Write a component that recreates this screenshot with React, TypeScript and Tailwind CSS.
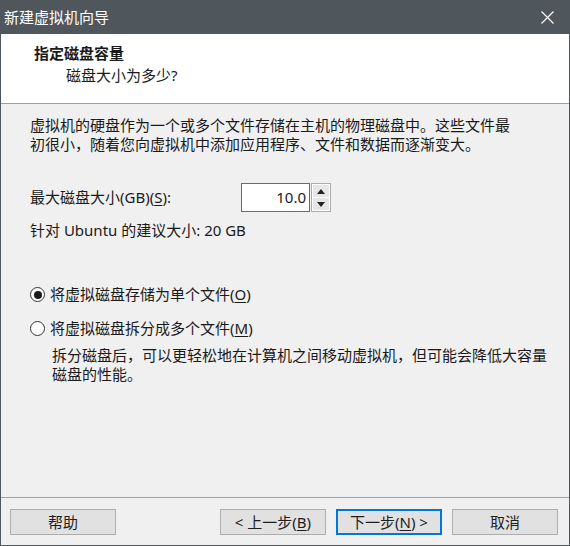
import type { ReactNode } from 'react'

const font = { fontFamily: '"Noto Sans", "Noto Sans CJK SC", sans-serif' }

function Key({ children }: { children: ReactNode }) {
  return <span className="underline underline-offset-2">{children}</span>
}

function Radio({ checked, children }: { checked?: boolean; children: ReactNode }) {
  return (
    <div className="flex items-center h-[19px]">
      <span className="flex h-[15px] w-[15px] items-center justify-center rounded-full border border-[#333] bg-white">
        {checked && <span className="h-[8px] w-[8px] rounded-full bg-[#1a1a1a]" />}
      </span>
      <span className="ml-[5px]">{children}</span>
    </div>
  )
}

function Button({ children, primary }: { children: ReactNode; primary?: boolean }) {
  return (
    <button
      type="button"
      className={
        primary
          ? 'h-[26px] w-[106px] border-2 border-[#0078d7] bg-[#e1e1e1] text-[15px] leading-none text-[#1e1e1e]'
          : 'h-[26px] w-[106px] border border-[#adadad] bg-[#e1e1e1] text-[15px] leading-none text-[#1e1e1e]'
      }
    >
      {children}
    </button>
  )
}

export default function App() {
  return (
    <div className="flex h-[546px] w-[570px] flex-col bg-[#4f565c] text-[15px] text-[#1a1a1a]" style={font}>
      <div className="flex h-[34px] shrink-0 items-center justify-between pl-[4px] pr-[16px] text-white">
        <span className="leading-[20px]">新建虚拟机向导</span>
        <svg width="13" height="13" viewBox="0 0 13 13" className="mt-[1px]">
          <path d="M0.5 0.5 L12.5 12.5 M12.5 0.5 L0.5 12.5" stroke="white" strokeWidth="1.2" />
        </svg>
      </div>

      <div className="mx-[1px] mb-[1px] flex flex-1 flex-col bg-[#f0f0f0]">
        <div className="h-[70px] shrink-0 border-b border-[#a0a0a0] bg-white pl-[33px] pt-[9px]">
          <div className="font-bold leading-[20px]">指定磁盘容量</div>
          <div className="mt-[2px] pl-[32px] leading-[20px]">磁盘大小为多少?</div>
        </div>

        <div className="flex-1 pl-[29px] pt-[12px]">
          <p className="leading-[19px]">
            虚拟机的硬盘作为一个或多个文件存储在主机的物理磁盘中。这些文件最
            <br />
            初很小，随着您向虚拟机中添加应用程序、文件和数据而逐渐变大。
          </p>

          <div className="mt-[29px] flex items-center">
            <span className="w-[211px] leading-[19px]">
              最大磁盘大小(GB)(<Key>S</Key>):
            </span>
            <div className="flex h-[29px] w-[69px] items-center justify-end border border-[#2f7bb8] bg-white pr-[3px] leading-none">
              10.0
            </div>
            <div className="ml-[1px] flex h-[29px] w-[20px] flex-col gap-[1px] border border-[#acacac] bg-white p-[1px]">
              <div className="flex flex-1 items-center justify-center bg-[#e6e6e6]">
                <svg width="8" height="5" viewBox="0 0 8 5">
                  <path d="M0 5 L4 0 L8 5 Z" fill="#222" />
                </svg>
              </div>
              <div className="flex flex-1 items-center justify-center bg-[#e6e6e6]">
                <svg width="8" height="5" viewBox="0 0 8 5">
                  <path d="M0 0 L4 5 L8 0 Z" fill="#222" />
                </svg>
              </div>
            </div>
          </div>

          <div className="mt-[9px] leading-[19px]">针对 Ubuntu 的建议大小: 20 GB</div>

          <div className="mt-[45px]">
            <Radio checked>
              将虚拟磁盘存储为单个文件(<Key>O</Key>)
            </Radio>
          </div>
          <div className="mt-[15px]">
            <Radio>
              将虚拟磁盘拆分成多个文件(<Key>M</Key>)
            </Radio>
          </div>
          <p className="mt-[8px] pl-[22px] leading-[19px]">
            拆分磁盘后，可以更轻松地在计算机之间移动虚拟机，但可能会降低大容量
            <br />
            磁盘的性能。
          </p>
        </div>

        <div className="flex h-[48px] shrink-0 items-start border-t border-[#a0a0a0] pl-[9px] pr-[11px] pt-[11px]">
          <Button>帮助</Button>
          <div className="ml-auto flex gap-[10px]">
            <Button>
              &lt; 上一步(<Key>B</Key>)
            </Button>
            <Button primary>
              下一步(<Key>N</Key>) &gt;
            </Button>
            <Button>取消</Button>
          </div>
        </div>
      </div>
    </div>
  )
}
